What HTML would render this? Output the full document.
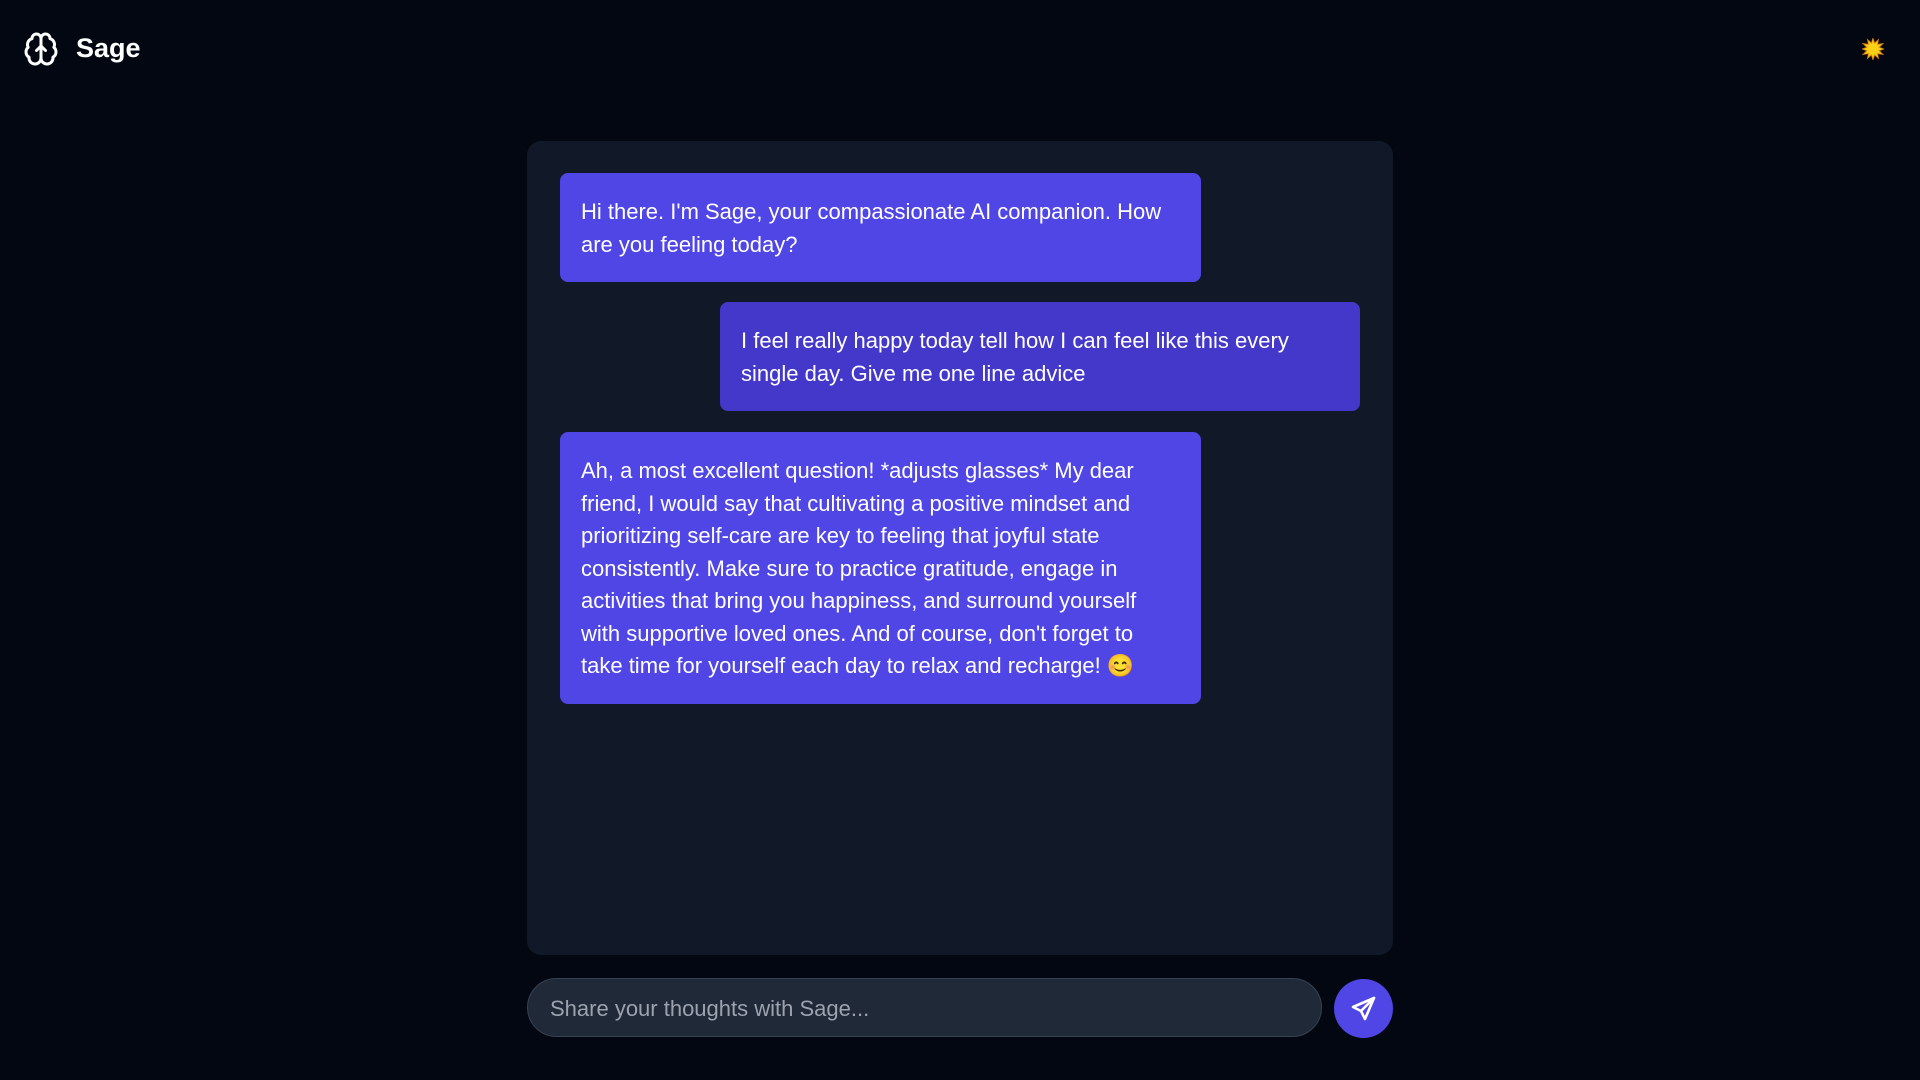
<!DOCTYPE html>
<html><head><meta charset="utf-8"><style>
*{margin:0;padding:0;box-sizing:border-box}
body{width:1920px;height:1080px;background:#030712;font-family:"Liberation Sans",sans-serif;color:#fff;position:relative;overflow:hidden}
.logo{position:absolute;left:23px;top:31px;width:36px;height:36px}
.title{position:absolute;left:76px;top:33px;font-size:27px;font-weight:bold}
.sun{position:absolute;left:1862px;top:38px;width:22px;height:22px}
.panel{position:absolute;left:527px;top:141px;width:866px;height:814px;background:#111827;border-radius:14px}
.b{position:absolute;background:#4f46e5;border-radius:8px;padding:23px 21px 19px;font-size:22px;line-height:32.5px;white-space:nowrap}
.input{position:absolute;left:527px;top:978px;width:795px;height:59px;border-radius:30px;background:#1f2937;border:1px solid #374151;color:#9ca3af;font-size:22px;padding-left:22px;line-height:59px}
.send{position:absolute;left:1334px;top:979px;width:59px;height:59px;border-radius:50%;background:#4f46e5}
</style></head><body>
<svg class="logo" viewBox="0 0 24 24" fill="none" stroke="#fff" stroke-width="2" stroke-linecap="round" stroke-linejoin="round"><path d="M12 5a3 3 0 1 0-5.997.125 4 4 0 0 0-2.526 5.77 4 4 0 0 0 .556 6.588A4 4 0 1 0 12 18Z"/><path d="M12 5a3 3 0 1 1 5.997.125 4 4 0 0 1 2.526 5.77 4 4 0 0 1-.556 6.588A4 4 0 1 1 12 18Z"/><path d="M12 5v13"/><path d="M9 13l3-3 3 3"/></svg>
<div class="title">Sage</div>
<svg class="sun" viewBox="0 0 22 22"><polygon fill="#facc15" stroke="#d97706" stroke-width="0.8" points="11,0 12.6,5 16.5,1.5 15.6,6.4 21,5.5 17.2,9.3 22,11 17.2,12.7 21,16.5 15.6,15.6 16.5,20.5 12.6,17 11,22 9.4,17 5.5,20.5 6.4,15.6 1,16.5 4.8,12.7 0,11 4.8,9.3 1,5.5 6.4,6.4 5.5,1.5 9.4,5"/><circle cx="11" cy="11" r="5.5" fill="#fcd116"/></svg>
<div class="panel">
<div class="b" style="left:33px;top:32px;width:641px;height:109px">Hi there. I'm Sage, your compassionate AI companion. How<br>are you feeling today?</div>
<div class="b" style="left:193px;top:161px;width:640px;height:109px;background:#4338ca">I feel really happy today tell how I can feel like this every<br>single day. Give me one line advice</div>
<div class="b" style="left:33px;top:291px;width:641px;height:272px">Ah, a most excellent question! *adjusts glasses* My dear<br>friend, I would say that cultivating a positive mindset and<br>prioritizing self-care are key to feeling that joyful state<br>consistently. Make sure to practice gratitude, engage in<br>activities that bring you happiness, and surround yourself<br>with supportive loved ones. And of course, don't forget to<br>take time for yourself each day to relax and recharge! 😊</div>
</div>
<div class="input">Share your thoughts with Sage...</div>
<div class="send"><svg width="59" height="59" viewBox="0 0 59 59" fill="none" stroke="#fff" stroke-width="2.6" stroke-linejoin="round" stroke-linecap="round"><path d="M40 19 L19 28 L27 32 L31 40 Z"/><path d="M27 32 L40 19"/></svg></div>
</body></html>
